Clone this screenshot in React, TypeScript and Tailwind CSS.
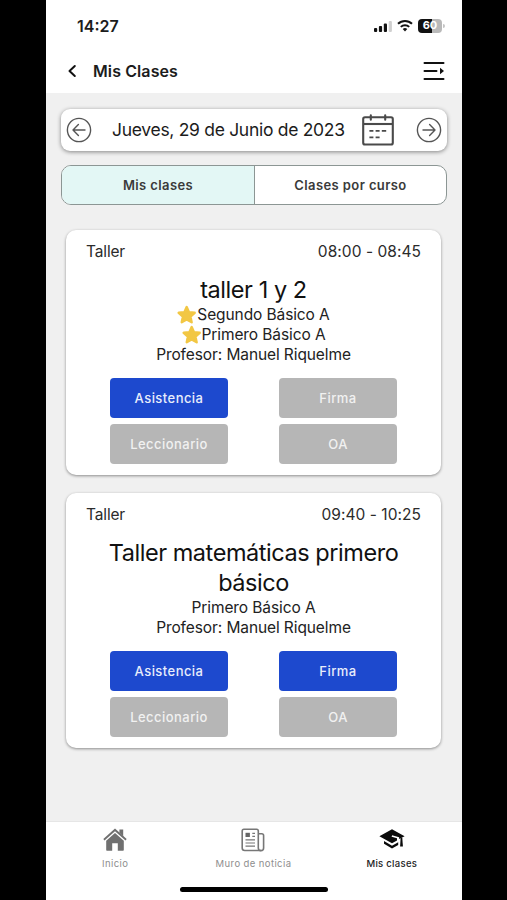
import React, { useState } from "react";

interface Course {
  name: string;
  starred: boolean;
}

interface ClassItem {
  id: number;
  type: string;
  time: string;
  title: string;
  courses: Course[];
  teacher: string;
  actions: { label: string; enabled: boolean }[];
}

const classes: ClassItem[] = [
  {
    id: 1,
    type: "Taller",
    time: "08:00 - 08:45",
    title: "taller 1 y 2",
    courses: [
      { name: "Segundo Básico A", starred: true },
      { name: "Primero Básico A", starred: true },
    ],
    teacher: "Manuel Riquelme",
    actions: [
      { label: "Asistencia", enabled: true },
      { label: "Firma", enabled: false },
      { label: "Leccionario", enabled: false },
      { label: "OA", enabled: false },
    ],
  },
  {
    id: 2,
    type: "Taller",
    time: "09:40 - 10:25",
    title: "Taller matemáticas primero básico",
    courses: [{ name: "Primero Básico A", starred: false }],
    teacher: "Manuel Riquelme",
    actions: [
      { label: "Asistencia", enabled: true },
      { label: "Firma", enabled: true },
      { label: "Leccionario", enabled: false },
      { label: "OA", enabled: false },
    ],
  },
];

const CircleArrow = ({ flip = false }: { flip?: boolean }) => (
  <svg className={flip ? "w-[26px] h-[26px] rotate-180" : "w-[26px] h-[26px]"} viewBox="0 0 26 26" fill="none" stroke="#555" strokeWidth="1.4">
    <circle cx="13" cy="13" r="11.6" />
    <path strokeLinecap="round" strokeLinejoin="round" d="M19 13H7.4M12.4 7.6L7 13l5.4 5.4" />
  </svg>
);

const CalendarIcon = () => (
  <svg className="w-8 h-8" viewBox="0 0 32 32" fill="none" stroke="#4a4a4a">
    <rect x="1.2" y="3.2" width="29.6" height="27.3" rx="1.8" strokeWidth="2.1" />
    <path strokeWidth="2.1" d="M1.2 10h29.6" />
    <path strokeWidth="2.1" strokeLinecap="round" d="M8.8 1.2v4.6M23.2 1.2v4.6" />
    <path strokeWidth="1.9" d="M7.4 16.9h4M13.6 16.9h4M19.8 16.9h4.4M7.4 23.4h4M13.6 23.4h4" />
  </svg>
);

const StarIcon = () => (
  <svg className="w-5 h-5 shrink-0" viewBox="0 0 19 19">
    <path
      d="M9.2 1.9l2.2 4.9 5.4.6-4 3.7 1.1 5.3-4.7-2.6-4.7 2.6 1.1-5.3-4-3.7 5.4-.6z"
      fill="#f2c744"
      stroke="#f2c744"
      strokeWidth="2.3"
      strokeLinejoin="round"
    />
  </svg>
);

const StatusBar = () => (
  <div className="h-[50px] pt-px pl-[31px] pr-[17px] flex items-center justify-between">
    <span className="text-[16px] font-semibold text-[#1c1c1c]">14:27</span>
    <div className="flex items-center">
      <svg className="w-[20px] h-[14px]" viewBox="0 0 20 14">
        <rect x="0" y="9" width="3.2" height="4" rx="1" fill="#111" />
        <rect x="4.9" y="7" width="3.2" height="6" rx="1" fill="#111" />
        <rect x="9.8" y="4.4" width="3.2" height="8.6" rx="1" fill="#111" />
        <rect x="14.7" y="2" width="3.2" height="11" rx="1" fill="#d0d0d0" />
      </svg>
      <svg className="ml-[3px] w-[16px] h-[13px]" viewBox="0 0 16 13" fill="none" stroke="#111" strokeWidth="2">
        <path d="M1 4.8a10 10 0 0114 0" />
        <path d="M3.8 7.9a6 6 0 018.4 0" />
        <path d="M8 12.4L5.7 10a3.3 3.3 0 014.6 0z" fill="#111" stroke="none" />
      </svg>
      <div className="ml-[5px] w-[24px] h-[14px] rounded-[4px] bg-gradient-to-r from-[#111] from-60% to-[#b9b9b9] to-60% flex items-center justify-center text-[11px] leading-none font-bold text-white">
        60
      </div>
      <div className="ml-px w-[2px] h-[4px] rounded-r-full bg-[#c4c4c4]" />
    </div>
  </div>
);

const ClassCard = ({ item }: { item: ClassItem }) => (
  <article className="w-[375px] bg-white rounded-[10px] shadow-[0_1px_3px_rgba(0,0,0,0.42)] pt-[12px] pb-[11px]">
    <div className="h-5 px-[20px] flex items-center justify-between text-[15.5px] text-[#2b2b2b]">
      <span className="tracking-[-0.15px]">{item.type}</span>
      <span className="tracking-[0.05px]">{item.time}</span>
    </div>
    <h2 className="mt-[13px] px-9 text-center text-[23.5px] leading-[30px] tracking-[-0.45px] text-[#111]">{item.title}</h2>
    <div className="flex flex-col items-center text-[15.5px] leading-5 tracking-[-0.1px] text-[#222]">
      {item.courses.map((course) => (
        <p key={course.name} className="flex items-center">
          {course.starred && <StarIcon />}
          <span>{course.name}</span>
        </p>
      ))}
      <p>Profesor: {item.teacher}</p>
    </div>
    <div className="mt-[13px] pl-[44px] grid grid-cols-[118px_118px] gap-x-[51px] gap-y-[6px]">
      {item.actions.map((action) => (
        <button
          key={action.label}
          disabled={!action.enabled}
          className={
            action.enabled
              ? "h-10 pt-0.5 rounded-[4px] bg-[#1d49ce] text-[13px] font-medium tracking-[0.45px] text-[#e8edfb]"
              : "h-10 pt-0.5 rounded-[4px] bg-[#b6b6b6] text-[13px] font-medium tracking-[0.45px] text-[#f1f1f1]"
          }
        >
          {action.label}
        </button>
      ))}
    </div>
  </article>
);

export default function App() {
  const [tab, setTab] = useState<"mine" | "course">("mine");

  return (
    <div className="w-full h-[900px] pl-px bg-black flex justify-center overflow-hidden font-[Inter,'Liberation_Sans',sans-serif]">
      <div className="w-[416px] h-full bg-[#f0f0f0] flex flex-col">
        {/* Header */}
        <header className="h-[93px] bg-white shrink-0">
          <StatusBar />
          <div className="h-[42px] pl-[21px] pr-[17px] flex items-center">
            <svg className="w-[10px] h-[14px]" viewBox="0 0 10 14" fill="none" stroke="#111" strokeWidth="2">
              <path strokeLinecap="round" strokeLinejoin="round" d="M7.8 2L2.5 7l5.3 5" />
            </svg>
            <h1 className="ml-[16px] text-[16px] font-semibold tracking-[0.1px] text-[#1c1c1c]">Mis Clases</h1>
            <svg className="ml-auto w-[22px] h-[20px]" viewBox="0 0 22 20" fill="none" stroke="#111" strokeWidth="2" strokeLinecap="round">
              <path d="M1.5 2h19M1.5 10h12M1.5 18h19" />
              <path d="M17 6.8v6.4l4-3.2z" fill="#111" stroke="none" />
            </svg>
          </div>
        </header>

        <main className="flex-1 flex flex-col items-center pt-4">
          {/* Date picker */}
          <div className="w-[386px] h-[42px] pl-[5px] pr-[5px] bg-white rounded-[9px] shadow-[0_1px_4px_rgba(0,0,0,0.45)] flex items-center">
            <CircleArrow />
            <span className="ml-[20px] pt-px w-[234px] whitespace-nowrap text-[17.5px] tracking-[-0.3px] text-[#1c1c1c]">
              Jueves, 29 de Junio de 2023
            </span>
            <div className="ml-[16px]">
              <CalendarIcon />
            </div>
            <div className="ml-auto">
              <CircleArrow flip />
            </div>
          </div>

          {/* Tabs */}
          <div className="mt-[14px] w-[386px] h-10 shrink-0 grid grid-cols-[193px_1fr] rounded-[10px] border border-[#8c9694] bg-white overflow-hidden text-[13px] font-semibold tracking-[0.4px] text-[#3a3a3a]">
            <button
              onClick={() => setTab("mine")}
              className={tab === "mine" ? "pt-0.5 border-r border-[#8c9694] bg-[#e3f7f5]" : "pt-0.5 border-r border-[#8c9694]"}
            >
              Mis clases
            </button>
            <button onClick={() => setTab("course")} className={tab === "course" ? "pt-0.5 bg-[#e3f7f5]" : "pt-0.5"}>
              Clases por curso
            </button>
          </div>

          <section className="mt-[25px] pr-px flex flex-col gap-[18px]">
            {classes.map((item) => (
              <ClassCard key={item.id} item={item} />
            ))}
          </section>
        </main>

        {/* Bottom navigation */}
        <nav className="h-[79px] shrink-0 bg-white border-t border-[#e6e6e6] flex flex-col items-center">
          <div className="w-full h-[65px] pt-[6px] pr-px grid grid-cols-3 text-[9.5px] leading-3 tracking-[0.4px] text-[#8e8e8e]">
            <div className="flex flex-col items-center gap-[6px]">
              <svg className="w-[24px] h-[24px]" viewBox="0 0 24 24" fill="#707070">
                <path d="M16.4 1.4h3.8v7l-3.8-3.6z" />
                <path d="M12 .6L.3 11.1l1.2 1.4L12 3.3l10.5 9.2 1.2-1.4z" />
                <path d="M12 4.9l-8.8 7.8v9.1c0 .6.4 1 1 1h5v-7.6h5.6v7.6h5c.6 0 1-.4 1-1v-9.1z" />
              </svg>
              <span>Inicio</span>
            </div>
            <div className="flex flex-col items-center gap-[6px]">
              <svg className="w-[24px] h-[24px]" viewBox="0 0 24 24" fill="none" stroke="#777" strokeWidth="1.6">
                <path d="M17.3 20V3a1.7 1.7 0 00-1.7-1.7H2.9A1.7 1.7 0 001.2 3v17a2.5 2.5 0 002.5 2.5h16.4" />
                <path d="M17.3 5.8h3.5a1.8 1.8 0 011.8 1.8V20a2.6 2.6 0 01-5.3 0" />
                <rect x="4.5" y="4.8" width="4.4" height="4.2" fill="#666" stroke="none" />
                <path strokeWidth="1.2" d="M11.3 5.4H14M11.3 8.4H14M4.5 11.8H14M4.5 15H14M4.5 18.2H14" />
              </svg>
              <span>Muro de noticia</span>
            </div>
            <div className="flex flex-col items-center gap-[6px] text-[#222] font-medium">
              <svg className="w-[26px] h-[24px]" viewBox="0 0 26 24" fill="#0b0b0b">
                <path d="M13 1.2L.4 8.2 13 15.2l5-2.8V10.3l-5.4-1.5.5-1.5 7 2v1.8l5.5-2.9z" />
                <path d="M5 13v2.7l8 4.7 6.2-3.5v-2.7L13 17.7z" />
                <path d="M21.6 9.8h1.7l.6 8.8h-2.8z" />
              </svg>
              <span className="tracking-[0.3px]">Mis clases</span>
            </div>
          </div>
          <div className="w-[148px] h-[5px] shrink-0 rounded-full bg-black" />
        </nav>
      </div>
    </div>
  );
}
